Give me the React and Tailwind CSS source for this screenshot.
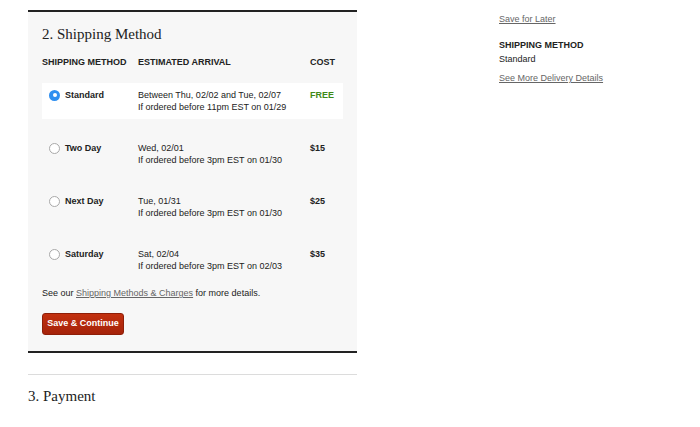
import React, { useState } from "react";

const rows = [
  { id: "standard", name: "Standard", when: "Between Thu, 02/02 and Tue, 02/07", cutoff: "If ordered before 11pm EST on 01/29", cost: "FREE" },
  { id: "two", name: "Two Day", when: "Wed, 02/01", cutoff: "If ordered before 3pm EST on 01/30", cost: "$15" },
  { id: "next", name: "Next Day", when: "Tue, 01/31", cutoff: "If ordered before 3pm EST on 01/30", cost: "$25" },
  { id: "sat", name: "Saturday", when: "Sat, 02/04", cutoff: "If ordered before 3pm EST on 02/03", cost: "$35" },
];

function Radio({ checked }) {
  if (checked) {
    return (
      <span className="grid place-items-center h-[11px] w-[11px] rounded-full bg-[#2f8ff0] shrink-0">
        <span className="h-[4px] w-[4px] rounded-full bg-white" />
      </span>
    );
  }
  return <span className="h-[11px] w-[11px] rounded-full border border-[#a9a9a9] bg-white shrink-0" />;
}

function MethodRow({ row, selected, onPick }) {
  return (
    <button
      type="button"
      onClick={onPick}
      className={`grid grid-cols-[96px_172px_1fr] h-[36px] pt-[6px] text-left ${selected ? "bg-white" : ""}`}
    >
      <div className="flex items-center gap-[5px] pl-[7px] h-[12px]">
        <Radio checked={selected} />
        <span className="font-bold text-[9px] leading-[12px] text-[#222]">{row.name}</span>
      </div>
      <div className="text-[9px] leading-[12px] text-[#222]">
        <div>{row.when}</div>
        <div>{row.cutoff}</div>
      </div>
      <div className={`font-bold text-[9px] leading-[12px] ${row.cost === "FREE" ? "text-[#3f8a17]" : "text-[#222]"}`}>
        {row.cost}
      </div>
    </button>
  );
}

export default function App() {
  const [picked, setPicked] = useState("standard");
  return (
    <div className="w-[700px] h-[427px] bg-white flex" style={{ fontFamily: "'Liberation Sans', Arial, sans-serif" }}>
      <div className="ml-[28px] w-[329px] pt-[10px]">
        <div className="border-y-2 border-[#222] bg-[#f7f7f7] px-[14px] pt-[12px] pb-[16px]">
          <h2 className="text-[15px] leading-[20px] text-[#222]" style={{ fontFamily: "'Liberation Serif', Georgia, serif" }}>
            2. Shipping Method
          </h2>
          <div className="mt-[12px] grid grid-cols-[96px_172px_1fr] text-[9px] leading-[12px] font-bold text-[#222]">
            <div>SHIPPING METHOD</div>
            <div>ESTIMATED ARRIVAL</div>
            <div>COST</div>
          </div>
          <div className="mt-[15px] flex flex-col gap-[17px]">
            {rows.map((r) => (
              <MethodRow key={r.id} row={r} selected={picked === r.id} onPick={() => setPicked(r.id)} />
            ))}
          </div>
          <p className="mt-[9px] text-[9px] leading-[12px] text-[#222]">
            See our <a href="#" className="underline text-[#666]">Shipping Methods &amp; Charges</a> for more details.
          </p>
          <button
            type="button"
            className="mt-[14px] h-[22px] w-[82px] rounded-[3px] border border-[#8e1e08] bg-gradient-to-b from-[#c2300f] to-[#a5230a] text-white text-[9px] font-bold"
          >
            Save &amp; Continue
          </button>
        </div>
        <div className="mt-[21px] border-t border-[#dcdcdc]" />
        <h2 className="mt-[11px] text-[15px] leading-[20px] text-[#222]" style={{ fontFamily: "'Liberation Serif', Georgia, serif" }}>
          3. Payment
        </h2>
      </div>
      <div className="ml-[142px] pt-[13px] text-[9px] leading-[12px] text-[#222]">
        <a href="#" className="underline text-[#666]">Save for Later</a>
        <div className="mt-[14px] font-bold">SHIPPING METHOD</div>
        <div className="mt-[2px]">Standard</div>
        <a href="#" className="block mt-[7px] underline text-[#666]">See More Delivery Details</a>
      </div>
    </div>
  );
}
